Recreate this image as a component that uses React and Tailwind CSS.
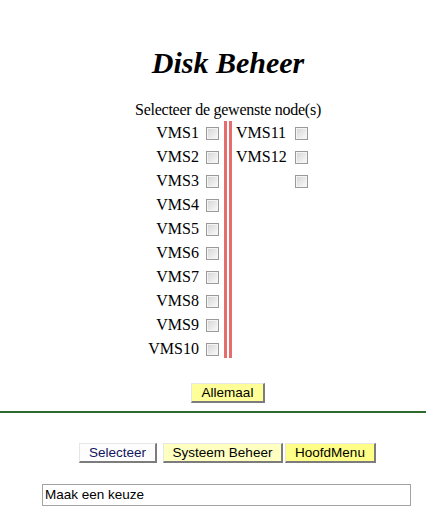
import React from "react";

const left = ["VMS1", "VMS2", "VMS3", "VMS4", "VMS5", "VMS6", "VMS7", "VMS8", "VMS9", "VMS10"];
const right = ["VMS11", "VMS12", ""];

function Box() {
  return (
    <span className="block w-[13px] h-[13px] border border-[#9a9a9a] bg-linear-to-br from-[#d4d4d4] to-[#fbfbfb] shadow-[inset_0_0_0_1px_#f4f4f4]" />
  );
}

function Btn({ children, className }) {
  return (
    <button
      className={`block h-[20px] text-[13.5px] leading-none text-center border-t border-l border-t-[#e6e6e6] border-l-[#e6e6e6] border-r-2 border-b-2 border-r-[#7c7c7c] border-b-[#7c7c7c] ${className}`}
      style={{ fontFamily: '"Liberation Sans", Arial, sans-serif' }}
    >
      {children}
    </button>
  );
}

export default function App() {
  return (
    <div className="w-[426px] min-h-[522px] bg-white text-black overflow-hidden">
      <div className="w-[456px] pt-[45px]">
        {/* Header */}
        <div style={{ fontFamily: '"Liberation Serif", "Times New Roman", serif' }}>
          <h1 className="text-center text-[30px] leading-[36px] font-bold italic">Disk Beheer</h1>
          <p className="mt-[19px] text-center text-[16px] leading-[20px] tracking-[-0.25px]">
            Selecteer de gewenste node(s)
          </p>

          {/* Node table */}
          <div className="mt-[1px] ml-[145px] flex">
            <div className="w-[79px] pr-[5px] flex flex-col">
              {left.map((n) => (
                <div key={n} className="h-[24px] flex items-center justify-end gap-[7px] text-[16px]">
                  <span>{n}</span>
                  <Box />
                </div>
              ))}
            </div>
            <div className="flex gap-[2px] mb-[3px]">
              <div className="w-[3px] bg-[#e66d6d]" />
              <div className="w-[3px] bg-[#e66d6d]" />
            </div>
            <div className="pl-[4px] flex flex-col">
              {right.map((n, i) => (
                <div key={i} className="h-[24px] flex items-center gap-[7px] text-[16px]">
                  <span className="w-[52px]">{n}</span>
                  <Box />
                </div>
              ))}
            </div>
          </div>
        </div>

        <div className="mt-[22px] flex justify-center">
          <Btn className="w-[74px] bg-[#ffff99] text-black">Allemaal</Btn>
        </div>
      </div>

      <div className="mt-[8px] h-[2px] bg-[#2f6a2f]" />

      <div className="mt-[30px] flex items-start ml-[79px]">
        <Btn className="w-[78px] bg-[#fdfdfd] text-[#14145e]">Selecteer</Btn>
        <Btn className="ml-[6px] w-[120px] bg-[#ffffc2] text-black">Systeem Beheer</Btn>
        <Btn className="ml-[2px] w-[91px] bg-[#ffff88] text-black">HoofdMenu</Btn>
      </div>

      <div
        className="mt-[21px] ml-[42px] w-[369px] h-[22px] border border-[#a3a3a3] flex items-center pl-[2px] text-[13.5px]"
        style={{ fontFamily: '"Liberation Sans", Arial, sans-serif' }}
      >
        Maak een keuze
      </div>
    </div>
  );
}
